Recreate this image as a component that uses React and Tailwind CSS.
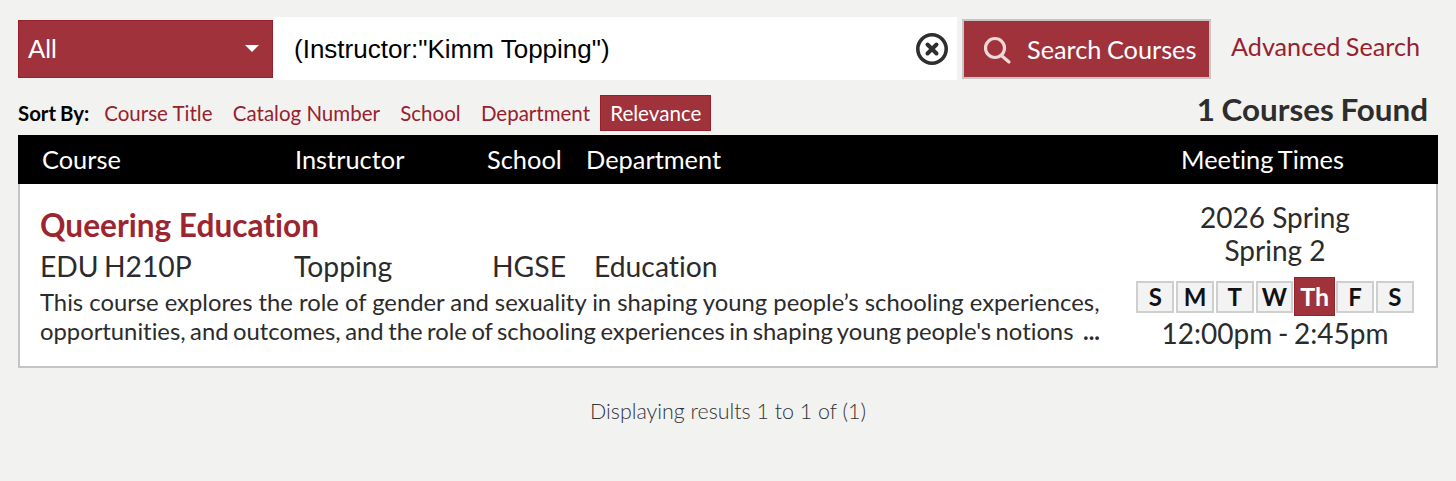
import React from 'react';

const days = ['S', 'M', 'T', 'W', 'Th', 'F', 'S'];
const sorts = ['Course Title', 'Catalog Number', 'School', 'Department'];

const App = () => {
  return (
    <div className="h-[481px] w-[1456px] overflow-hidden bg-[#f2f2f1] font-['Lato',sans-serif] text-[#2b2b2b] [font-variant-ligatures:none]">
      <div className="flex items-center pl-[18px] pt-[17px]">
        <div className="flex h-[58px] w-[255px] items-center justify-between border border-[#96202c] bg-[#a0323b] pl-[9px] pr-[13px] font-['Liberation_Sans',sans-serif] text-[26px] text-white">
          <span className="mt-[2px]">All</span>
          <span className="h-0 w-0 border-x-[7px] border-t-[7px] border-x-transparent border-t-white" />
        </div>
        <div className="flex h-[63px] w-[684px] items-center justify-between bg-white pl-[21px] pr-[8px] font-['Liberation_Sans',sans-serif] text-[26px] text-black">
          <span className="mt-[2px]">(Instructor:"Kimm Topping")</span>
          <svg width="34" height="34" viewBox="0 0 34 34" fill="none" stroke="#2e2e2e">
            <circle cx="17" cy="17" r="14.2" strokeWidth="3.6" />
            <path d="M12.5 12.5l9 9M21.5 12.5l-9 9" strokeWidth="4" strokeLinecap="round" />
          </svg>
        </div>
        <button className="ml-[5px] flex h-[60px] w-[249px] items-center border-2 border-[#c9c5c5] bg-[#a0323b] pl-[18px] text-[25.3px] text-white">
          <svg width="30" height="30" viewBox="0 0 30 30" fill="none" stroke="#f0d8d8" strokeWidth="3.2" className="mt-[2px]">
            <circle cx="13" cy="13" r="9.5" />
            <path d="M20 21l7 6" strokeLinecap="round" />
          </svg>
          <span className="ml-[15px] mt-[2px] [word-spacing:-1px]">Search Courses</span>
        </button>
        <a className="mb-[4px] ml-[20px] text-[25.2px] text-[#98212e] [word-spacing:-1px]">Advanced Search</a>
      </div>

      <div className="flex h-[55px] items-center pl-[18px] pr-[28px] pt-[11px]">
        <span className="mr-[15px] text-[20.4px] font-bold text-black [word-spacing:-1px]">Sort By:</span>
        {sorts.map((s) => (
          <a key={s} className="mr-[20.3px] text-[20.5px] text-[#98212e]">{s}</a>
        ))}
        <span className="-ml-[10px] flex h-[36px] w-[111px] items-center justify-center border border-[#96202c] bg-[#a0323b] text-[20.6px] text-white">Relevance</span>
        <span className="mb-[6px] ml-auto text-[31.4px] font-bold text-[#2d2d2d] [word-spacing:-1px]">1 Courses Found</span>
      </div>

      <div className="mx-[18px] flex h-[49px] items-center bg-black text-[25.4px] text-white">
        <span className="ml-[24px] w-[253px]">Course</span>
        <span className="w-[192px]">Instructor</span>
        <span className="w-[99px]">School</span>
        <span className="w-[595px]">Department</span>
        <span className="[word-spacing:-1.5px]">Meeting Times</span>
      </div>

      <div className="mx-[18px] flex h-[184px] border-2 border-t-0 border-[#c4c4c4] bg-white">
        <div className="w-[1094px] pl-[20px] pt-[21px]">
          <h2 className="text-[31.6px] font-bold leading-[40px] text-[#9c2530]">Queering Education</h2>
          <div className="mt-[1px] flex text-[28.3px] leading-[40px]">
            <span className="w-[254px] [word-spacing:-2px]">EDU H210P</span>
            <span className="w-[198px]">Topping</span>
            <span className="w-[102px]">HGSE</span>
            <span>Education</span>
          </div>
          <div className="mt-[2px] w-[1060px] whitespace-nowrap text-[23.8px] leading-[29px]">
            <p className="flex justify-between">
              <span>This course explores the role of gender and sexuality in shaping young people’s schooling experiences,</span>
            </p>
            <p className="flex justify-between">
              <span className="[word-spacing:-1.6px]">opportunities, and outcomes, and the role of schooling experiences in shaping young people's notions</span>
              <span className="font-bold">...</span>
            </p>
          </div>
        </div>
        <div className="flex flex-1 flex-col items-center pt-[17px] text-[28px] leading-[33px]">
          <div>2026 Spring</div>
          <div>Spring 2</div>
          <div className="mt-[10px] flex items-center gap-[2px]">
            {days.map((d, i) =>
              d === 'Th' ? (
                <span key={i} className="-mx-[1px] flex h-[39px] w-[41px] items-center justify-center border border-[#96202c] bg-[#a0323b] text-[25px] font-bold text-white">{d}</span>
              ) : (
                <span key={i} className="flex h-[32px] w-[37.7px] items-center justify-center border-2 border-[#cfcfcf] bg-[#f3f3f3] text-[24px] font-bold text-[#111]">{d}</span>
              )
            )}
          </div>
          <div className="mt-[1px] [word-spacing:-1.5px]">12:00pm - 2:45pm</div>
        </div>
      </div>

      <div className="mt-[27px] text-center text-[21.4px] font-light text-[#333]">Displaying results 1 to 1 of (1)</div>
    </div>
  );
};

export default App;
